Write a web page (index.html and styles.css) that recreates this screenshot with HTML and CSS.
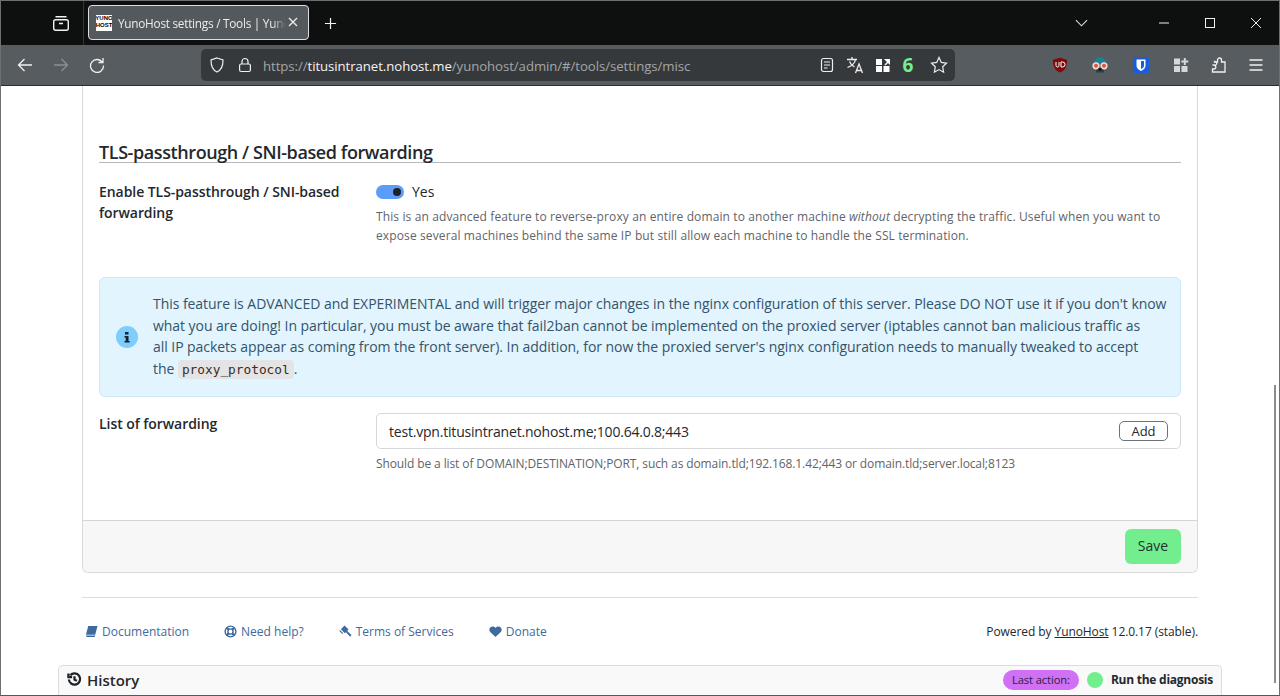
FILE: index.html
```html
<!DOCTYPE html>
<html lang="en">
<head>
<meta charset="utf-8">
<title>YunoHost settings / Tools | YunoHost</title>
<link rel="stylesheet" href="styles.css">
</head>
<body>
<div class="window">
  <header class="tabbar">
    <div class="tab-left">
      <svg class="i20" viewBox="0 0 20 20" fill="none" stroke="#f2f2f2" stroke-width="1.4"><rect x="2.7" y="6.7" width="14.6" height="10.6" rx="2"/><path d="M4.500 3.700h11M8 10.500h4"/></svg>
    </div>
    <div class="tab">
      <span class="favicon"><span>YUNO</span><span>HOST</span></span>
      <span class="tab-title">YunoHost settings / Tools | Yuno</span>
      <svg class="tab-x" viewBox="0 0 10 10" stroke="#eee" stroke-width="1.3"><path d="M1 1l8 8M9 1l-8 8"/></svg>
    </div>
    <svg class="newtab" viewBox="0 0 14 14" stroke="#f2f2f2" stroke-width="1.3"><path d="M7 1v12M1 7h12"/></svg>
    <div class="spacer"></div>
    <svg class="chev" viewBox="0 0 14 8" fill="none" stroke="#ddd" stroke-width="1.2"><path d="M1 1l6 6 6-6"/></svg>
    <div class="winbtns">
      <svg viewBox="0 0 12 12" stroke="#eee" stroke-width="1"><path d="M1 6h10"/></svg>
      <svg viewBox="0 0 12 12" fill="none" stroke="#eee" stroke-width="1"><rect x="1.500" y="1.500" width="9" height="9"/></svg>
      <svg viewBox="0 0 12 12" stroke="#eee" stroke-width="1"><path d="M1 1l10 10M11 1L1 11"/></svg>
    </div>
  </header>
  <nav class="toolbar">
    <div class="navbtns">
      <svg class="i16" viewBox="0 0 16 16" fill="none" stroke="#f0f0f0" stroke-width="1.3"><path d="M15 8H1.500M7.500 2L1.500 8l6 6"/></svg>
      <svg class="i16" viewBox="0 0 16 16" fill="none" stroke="#8b9093" stroke-width="1.3"><path d="M1 8h13.500M8.500 2l6 6-6 6"/></svg>
      <svg class="i16" viewBox="0 0 16 16" fill="none" stroke="#f0f0f0" stroke-width="1.3"><path d="M13.500 5.500A6.500 6.500 0 1 0 14.500 8.500M14 1v4.500H9.500"/></svg>
    </div>
    <div class="urlbar">
      <svg class="i16" viewBox="0 0 16 16" fill="none" stroke="#f0f0f0" stroke-width="1.2"><path d="M8 1l6 2c0 6-1 10-6 12C3 13 2 9 2 3z"/></svg>
      <svg class="i16" viewBox="0 0 16 16" fill="none" stroke="#f0f0f0" stroke-width="1.2"><rect x="2.600" y="7" width="10.800" height="7.500" rx="1.500"/><path d="M5 7V4.500a3 3 0 0 1 6 0V7"/></svg>
      <span class="url"><span class="dim">https://</span>titusintranet.nohost.me<span class="dim">/yunohost/admin/#/tools/settings/misc</span></span>
      <div class="url-icons">
        <svg class="i16" viewBox="0 0 16 16" fill="none" stroke="#eee" stroke-width="1.2"><rect x="2.500" y="1.500" width="11" height="13" rx="2"/><path d="M5 5h6M5 8h6M5 11h3.500"/></svg>
        <svg class="i18" viewBox="0 0 18 18" fill="none" stroke="#eee" stroke-width="1.300"><path d="M1 3.500h10M6 1v2.500M9.500 3.500C9 7 5.500 10 1.500 11.500M3.500 5.500c1 2.500 3 4.500 5 5.500M9.500 17l3.500-9 3.500 9M10.700 14.500h5.500"/></svg>
        <svg class="i16" viewBox="0 0 16 16" fill="#fff"><rect x="1" y="2" width="6" height="6"/><rect x="1" y="9" width="6" height="6"/><rect x="8.500" y="9" width="6" height="6"/><path d="M9 2h6v6l-2-2-2.500 2.500-1-1L12 5z"/></svg>
        <span class="six">6</span>
        <svg class="i18 star" viewBox="0 0 18 18" fill="none" stroke="#eee" stroke-width="1.200"><path d="M9 1.500l2.300 4.900 5.200.7-3.800 3.700.9 5.400L9 13.600l-4.600 2.600.9-5.400L1.500 7.100l5.200-.7z"/></svg>
      </div>
    </div>
    <div class="ext">
      <svg class="i16 e1" viewBox="0 0 16 16"><path d="M8 .8l7 2c0 6-1 10.500-7 12.700C2 13.300 1 8.800 1 2.800z" fill="#800a0a"/><path d="M4 5v3.500a1.500 1.500 0 0 0 3 0V5M9 5v5h1.500a2.500 2.500 0 0 0 0-5z" fill="none" stroke="#fff" stroke-width="1"/></svg>
      <svg class="i18 e2" viewBox="0 0 18 18"><path d="M2.500 8.500a6.500 7.500 0 0 1 13 0z" fill="#1f7f96"/><path d="M5 12h8v4.500H5z" fill="#27424c"/><circle cx="5" cy="9.800" r="3.600" fill="#ecdcd2"/><circle cx="13" cy="9.800" r="3.600" fill="#ecdcd2"/><circle cx="5" cy="9.800" r="2" fill="#e0533c"/><circle cx="13" cy="9.800" r="2" fill="#e0533c"/><path d="M7.500 12h3v2.500h-3z" fill="#111"/></svg>
      <svg class="i16 e3" viewBox="0 0 16 16"><rect width="16" height="16" rx="2" fill="#175ddc"/><path d="M3.500 2.500h9v6c0 3-2.500 4.500-4.500 5.500-2-1-4.500-2.500-4.500-5.500z" fill="#fff"/><path d="M8 4h3v4.500c0 1.800-1.500 2.800-3 3.600z" fill="#175ddc"/></svg>
      <svg class="i16 e4" viewBox="0 0 16 16" fill="#d5d7d8"><rect x="1" y="1.500" width="6" height="6"/><rect x="1" y="9" width="6" height="6"/><rect x="8.500" y="9" width="6" height="6"/><path d="M10.800 1h2v2.500h2.500v2h-2.500V8h-2V5.500H8.300v-2h2.500z"/></svg>
      <svg class="i18 e5" viewBox="0 0 18 18" fill="none" stroke="#f0f0f0" stroke-width="1.300"><path d="M2.500 9h2a1.800 1.800 0 1 0 0-3.500V6h3V4a2 2 0 0 1 4 0v2H15v10H2.500v-3h2a1.800 1.800 0 0 0 0-3.500"/></svg>
      <svg class="i16 e6" viewBox="0 0 16 16" stroke="#f0f0f0" stroke-width="1.300"><path d="M1.500 3h13M1.500 8h13M1.500 13h13"/></svg>
    </div>
  </nav>
  <div class="viewport">
    <main class="page">
      <section class="card">
        <div class="card-body">
          <h2 class="section-title">TLS-passthrough / SNI-based forwarding</h2>
          <div class="row row-switch">
            <label class="row-label label-up">Enable TLS-passthrough / SNI-based forwarding</label>
            <div class="row-field">
              <div class="switch-line"><span class="switch"></span><span>Yes</span></div>
              <p class="hint hint-long">This is an advanced feature to reverse-proxy an entire domain to another machine <em>without</em> decrypting the traffic. Useful when you want to expose several machines behind the same IP but still allow each machine to handle the SSL termination.</p>
            </div>
          </div>
          <div class="alert">
            <svg class="alert-icon" viewBox="0 0 22 22"><circle cx="11" cy="11" r="11" fill="#7fcdfd"/><path d="M9 6h3.500v2.500H9zM8.500 10h4v5h1.200v1.500H8.500V15h1.200v-3.500H8.500z" fill="#10232e"/></svg>
            <p>This feature is ADVANCED and EXPERIMENTAL and will trigger major changes in the nginx configuration of this server. Please DO NOT use it if you don't know<br>what you are doing! In particular, you must be aware that fail2ban cannot be implemented on the proxied server (iptables cannot ban malicious traffic as<br>all IP packets appear as coming from the front server). In addition, for now the proxied server's nginx configuration needs to manually tweaked to accept<br>the <code>proxy_protocol</code>.</p>
          </div>
          <div class="row row-list">
            <label class="row-label">List of forwarding</label>
            <div class="row-field">
              <div class="input"><span class="input-text">test.vpn.titusintranet.nohost.me;100.64.0.8;443</span><button class="add" type="button">Add</button></div>
              <p class="hint hint-short">Should be a list of DOMAIN;DESTINATION;PORT, such as domain.tld;192.168.1.42;443 or domain.tld;server.local;8123</p>
            </div>
          </div>
        </div>
        <div class="card-foot"><button class="save" type="button">Save</button></div>
      </section>
      <footer class="foot">
        <div class="foot-links">
          <a><svg viewBox="0 0 14 14" fill="#3e6a9e"><path d="M3.500 1H13.500l-2.500 9.500H1zM1.200 11.300H11l-.4 1.700H1.500z"/></svg>Documentation</a>
          <a><svg viewBox="0 0 14 14" fill="none" stroke="#3e6a9e" stroke-width="1.500"><circle cx="7" cy="7" r="5.800"/><circle cx="7" cy="7" r="2.800"/><path d="M3 3l2.200 2.200M11 3L8.800 5.200M3 11l2.200-2.200M11 11L8.800 8.800" stroke-width="2.400"/></svg>Need help?</a>
          <a><svg viewBox="0 0 14 14" fill="#3e6a9e"><path d="M6 .5l4.300 4.300-4 4L2 4.500z"/><path d="M1 5.500l3.500 3.500-1 .6L.4 6.500zM7 7.200l1.400-1.400 5 5-1.400 1.900z"/></svg>Terms of Services</a>
          <a><svg viewBox="0 0 14 14" fill="#3e6a9e"><path d="M7 13L1.300 7.500C-.8 5 .8 1.500 4 1.500c1.300 0 2.300.6 3 1.600.7-1 1.700-1.600 3-1.600 3.200 0 4.800 3.500 2.700 6z"/></svg>Donate</a>
        </div>
        <p class="powered">Powered by <a>YunoHost</a> 12.0.17 (stable).</p>
      </footer>
      <div class="history">
        <div class="history-title"><svg viewBox="0 0 16 16" fill="none" stroke="#1f2326" stroke-width="2.400"><path d="M3.500 3.500A6 6 0 1 1 2 8M1.500 1.500v4H5.500M8 4.500V8l2.500 1.500"/></svg>History</div>
        <div class="history-right"><span class="pill">Last action:</span><span class="dot"></span><strong>Run the diagnosis</strong></div>
      </div>
    </main>
    <div class="scrollbar"><span class="thumb"></span></div>
  </div>
</div>
</body>
</html>
```
FILE: styles.css
```css
* { box-sizing: border-box; }
html, body { margin: 0; height: 100%; overflow: hidden; }
body { font-family: "Open Sans", "Noto Sans", sans-serif; color: #24282c; background: #fff; }
svg { display: block; flex: none; }
.window { height: 696px; width: 1280px; display: flex; flex-direction: column; border: 1px solid #6d7071; border-bottom: 1px solid #55585a; }
.i16 { width: 16px; height: 16px; }
.i18 { width: 18px; height: 18px; }
.i20 { width: 20px; height: 20px; }

.tabbar { height: 44px; background: #0e1010; display: flex; align-items: center; }
.tab-left { width: 83px; height: 44px; display: flex; align-items: center; padding-left: 50px; border-right: 1px solid #333638; }
.tab { width: 221px; height: 35px; margin-left: 4px; margin-bottom: 1px; background: #53595d; border: 1px solid #dcdede; border-radius: 4px; display: flex; align-items: center; padding-left: 7px; position: relative; overflow: hidden; }
.favicon { width: 16px; height: 16px; background: #fff; color: #000; font: 700 6px/7.500px "Liberation Sans", sans-serif; display: flex; flex-direction: column; align-items: center; flex: none; overflow: hidden; }
.tab-title { margin-left: 6px; width: 168px; flex: none; white-space: nowrap; overflow: hidden; font: 11.800px "Open Sans", sans-serif; color: #ececec; letter-spacing: -.26px; -webkit-mask-image: linear-gradient(to right, #000 92%, transparent); mask-image: linear-gradient(to right, #000 92%, transparent); }
.tab-x { position: absolute; right: 10px; top: 11px; width: 10px; height: 10px; }
.newtab { width: 13px; height: 13px; margin-left: 15px; }
.spacer { flex: 1; }
.chev { width: 13px; height: 8px; margin-right: 70px; }
.winbtns { display: flex; gap: 34px; padding-right: 17px; }
.winbtns svg { width: 12px; height: 12px; }

.toolbar { height: 41px; background: #565c60; display: flex; align-items: center; border-bottom: 1px solid #2a2d2f; }
.navbtns { display: flex; gap: 20px; padding-left: 16px; width: 200px; }
.urlbar { width: 754px; height: 32px; background: #36393c; border-radius: 5px; display: flex; align-items: center; padding-left: 8px; gap: 12px; }
.url { margin: 2px 0 0 -2px; font-size: 13.200px; color: #f4f4f4; white-space: nowrap; letter-spacing: -.06px; }
.url .dim { color: #a3a6a8; }
.url-icons { margin-left: auto; display: flex; align-items: center; gap: 11px; padding-right: 7px; }
.six { font: 700 19px/1 "Open Sans", sans-serif; color: #72ef8f; width: 12px; text-align: center; margin: 0 3px 0 0; }
.star { margin-left: 2px; }
.ext { flex: 1; display: flex; align-items: center; padding-left: 97px; }
.e2 { margin-left: 23px; }
.e3 { margin-left: 24px; }
.e4 { margin-left: 24px; }
.e5 { margin-left: 21px; }
.e6 { margin-left: 20px; }

.viewport { flex: 1; display: flex; min-height: 0; background: #fff; }
.page { flex: 1; min-width: 0; padding: 0 0 0 57px; display: flex; flex-direction: column; overflow: hidden; }
.scrollbar { width: 7px; position: relative; }
.thumb { display: block; position: absolute; right: 3px; top: 299px; bottom: 12px; width: 2px; background: #8a8c8e; }

.card { width: 1116px; margin-left: 24px; border: 1px solid #d9d9d9; border-top: 0; border-radius: 0 0 6px 6px; overflow: hidden; }
.card-body { padding: 54px 16px 0 16px; height: 434px; }
.section-title { margin: 0; font-size: 18px; line-height: 25px; font-weight: 600; border-bottom: 1px solid #b5b7b9; color: #24282c; height: 23px; letter-spacing: -.41px; white-space: nowrap; }
.row { display: flex; }
.row-switch { margin-top: 19px; height: 95px; }
.row-list { margin-top: 16px; }
.row-label { width: 277px; padding-right: 12px; font-size: 14px; line-height: 21px; font-weight: 600; letter-spacing: -.06px; }
.label-up { margin-top: -1px; }
.row-field { flex: 1; min-width: 0; }
.switch-line { display: flex; align-items: center; gap: 8px; font-size: 14px; height: 19px; }
.switch { width: 28px; height: 14px; border-radius: 7px; background: #5b9cf8; position: relative; }
.switch::after { content: ""; position: absolute; right: 3px; top: 3px; width: 8px; height: 8px; border-radius: 50%; background: #1d2126; }
.hint { margin: 0; font-size: 12px; line-height: 19px; color: #5f6468; }
.hint-long { margin-top: 6px; letter-spacing: .12px; }
.hint-short { margin-top: 5px; white-space: nowrap; letter-spacing: -.11px; }
.alert { height: 120px; background: #e2f4fd; border: 1px solid #cde9f8; border-radius: 6px; display: flex; align-items: center; padding: 0 6px 2px 16px; color: #33536b; }
.alert-icon { width: 22px; height: 22px; margin: 2px 15px 0 0; }
.alert p { margin: 0; font-size: 14px; line-height: 21.500px; letter-spacing: -.05px; white-space: nowrap; }
code { font: 12.800px "DejaVu Sans Mono", monospace; background: #e4e4e4; color: #3a2c2c; padding: 2px 4px; border-radius: 4px; letter-spacing: 0; }
.input { height: 36px; border: 1px solid #d5d7d9; border-radius: 5px; display: flex; align-items: center; justify-content: space-between; padding: 0 12px; font-size: 14px; color: #24282c; }
.input-text { letter-spacing: -.2px; }
.add { height: 20px; width: 49px; padding: 0; background: #fff; border: 1px solid #6f7377; border-radius: 5px; font: 13px "Open Sans", sans-serif; color: #24282c; }
.card-foot { height: 53px; background: #f7f7f7; border-top: 1px solid #d4d4d4; display: flex; justify-content: flex-end; align-items: center; padding: 0 16px 2px 0; }
.save { width: 56px; height: 35px; background: #72ee8f; border: 0; border-radius: 6px; font: 14px "Open Sans", sans-serif; color: #24332a; padding: 0 0 2px; }

.foot { width: 1116px; margin: 24px 0 0 24px; border-top: 1px solid #dcdcdc; display: flex; justify-content: space-between; align-items: center; height: 68px; padding: 0 0 0 3px; font-size: 12px; flex: none; }
.foot-links { display: flex; gap: 35px; color: #3e6a9e; }
.foot-links a { display: flex; align-items: center; gap: 4px; white-space: nowrap; }
.foot-links svg { width: 13px; height: 13px; }
.powered { margin: 0; white-space: nowrap; letter-spacing: -.08px; }
.powered a { text-decoration: underline; }
.history { width: 1164px; height: 30px; background: #f9f9f9; border: 1px solid #dcdcdc; border-bottom: 0; border-radius: 5px 5px 0 0; display: flex; align-items: center; justify-content: space-between; padding: 0 8px 2px; flex: none; }
.history-title { display: flex; align-items: center; gap: 5px; font-size: 15px; font-weight: 600; }
.history-title svg { width: 15px; height: 15px; }
.history-right { display: flex; align-items: center; font-size: 12px; white-space: nowrap; }
.pill { background: #d070f5; border-radius: 10px; height: 20px; padding: 0 9px; display: flex; align-items: center; font-size: 11.200px; color: #2d2140; letter-spacing: -.1px; }
.dot { width: 16px; height: 16px; border-radius: 50%; background: #72ee8f; margin: 0 8px; }
.history-right strong { font-weight: 700; letter-spacing: -.25px; }
```
